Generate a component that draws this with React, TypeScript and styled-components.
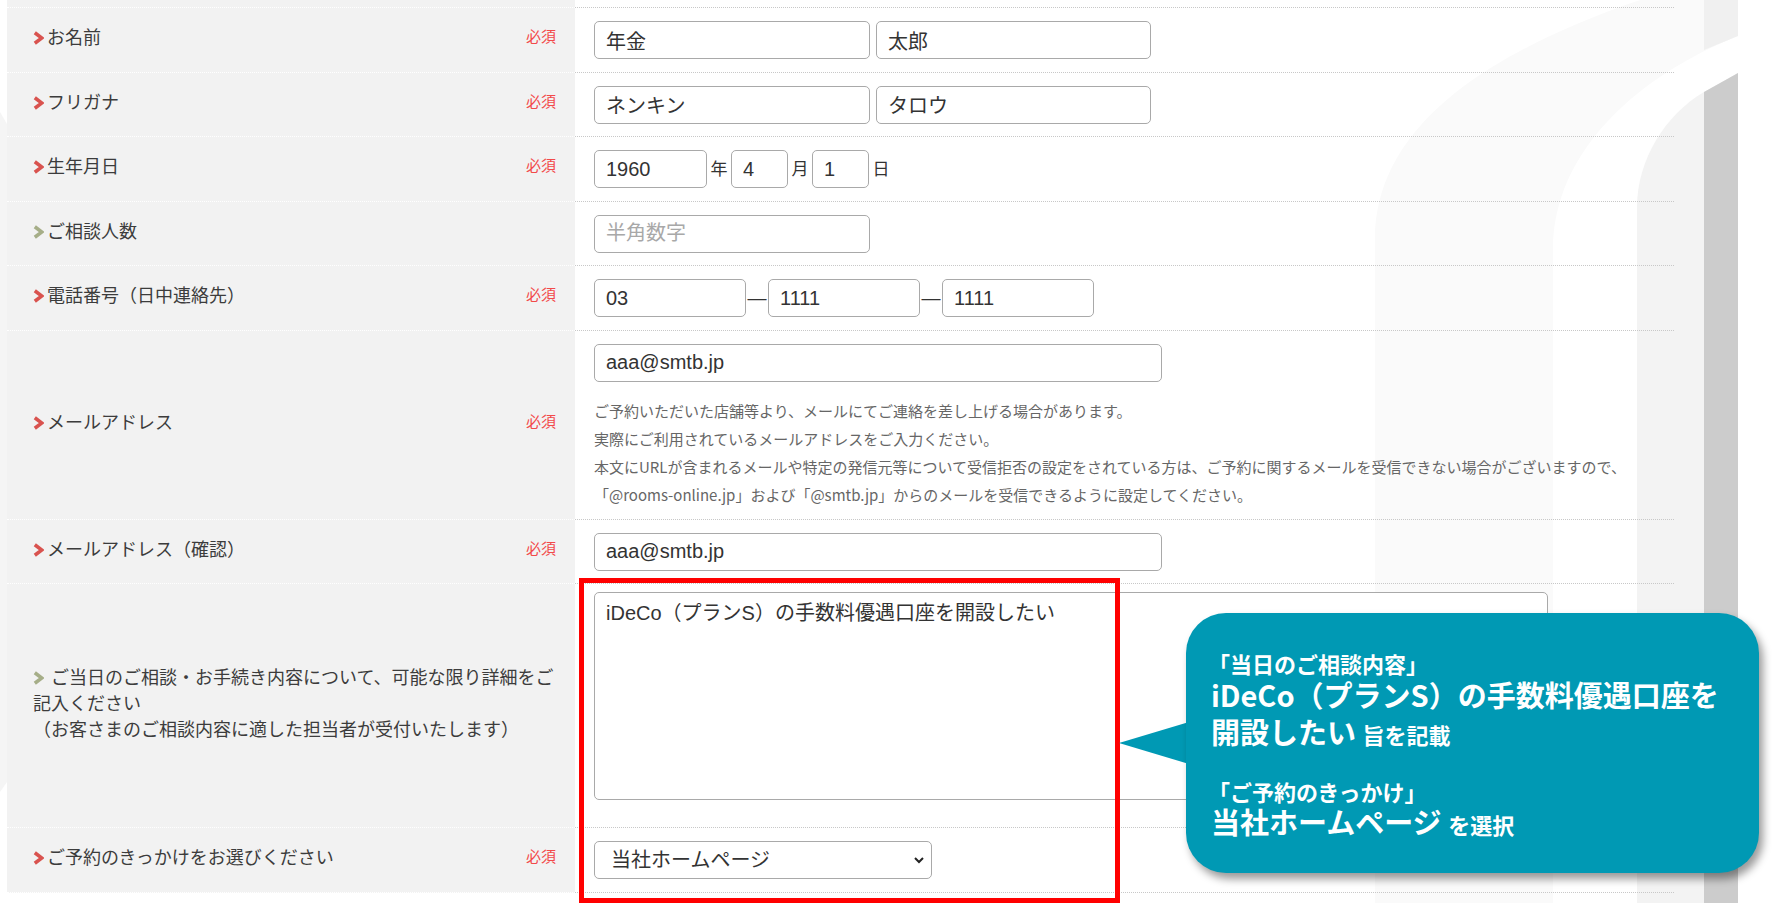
import React from 'react';
import styled, { createGlobalStyle } from 'styled-components';

const GlobalStyle = createGlobalStyle`
  html, body {
    margin: 0;
    padding: 0;
    background: #fff;
  }
  body {
    font-family: "Noto Sans CJK JP", "Noto Sans", sans-serif;
    color: #3c3c3c;
  }
`;

const Page = styled.div`
  position: relative;
  width: 1772px;
  height: 903px;
  overflow: hidden;
  background: #fff;
`;

const Backdrop = styled.svg`
  position: absolute;
  left: 0;
  top: 0;
  width: 1772px;
  height: 903px;
`;

const FormTable = styled.div`
  position: relative;
  margin-left: 7px;
  width: 1667px;
  padding-top: 7px;
  background: linear-gradient(to right, #f2f2f2 568px, transparent 568px);
`;

const Row = styled.div`
  display: grid;
  grid-template-columns: 568px 1fr;
`;

const LabelCell = styled.div<{ $last?: boolean }>`
  display: flex;
  align-items: center;
  padding: 0 19px 7px 26px;
  border-top: 1px dotted #fff;
  border-bottom: ${(p) => (p.$last ? '1px dotted #fff' : 'none')};
  font-size: 18px;
  line-height: 26px;
  color: #3c3c3c;
`;

const LabelText = styled.div`
  flex: 1;
  white-space: nowrap;
`;

const ChevronIcon = styled.svg`
  display: inline-block;
  vertical-align: -1px;
  margin-right: 3px;
`;

const Required = styled.span`
  margin-left: auto;
  font-size: 15px;
  color: #f24a4a;
`;

const ValueCell = styled.div<{ $pt: number; $pb: number; $last?: boolean }>`
  border-top: 1px dotted #c8c8c8;
  border-bottom: ${(p) => (p.$last ? '1px dotted #c8c8c8' : 'none')};
  padding: ${(p) => p.$pt}px 0 ${(p) => p.$pb}px 19px;
`;

const Inline = styled.div<{ $gap?: number }>`
  display: flex;
  align-items: center;
  gap: ${(p) => p.$gap ?? 0}px;
`;

const TextInput = styled.input<{ $w: number }>`
  box-sizing: border-box;
  width: ${(p) => p.$w}px;
  height: 38px;
  padding: 0 11px;
  border: 1px solid #a9a9a9;
  border-radius: 5px;
  background: #fff;
  font-family: "Liberation Sans", "Noto Sans CJK JP", sans-serif;
  font-size: 20px;
  color: #333;
  outline: none;

  &::placeholder {
    color: #a8a8a8;
  }
`;

const Unit = styled.span`
  width: 24px;
  margin-bottom: 4px;
  text-align: center;
  font-size: 17px;
  color: #333;
`;

const Dash = styled.span`
  width: 22px;
  text-align: center;
  font-family: "Liberation Sans", sans-serif;
  font-size: 19px;
  color: #333;
`;

const Notes = styled.div`
  margin-top: 15px;
  font-size: 15px;
  line-height: 28px;
  color: #666;
  white-space: nowrap;
`;

const MessageBox = styled.textarea`
  display: block;
  box-sizing: border-box;
  width: 954px;
  height: 208px;
  padding: 7px 11px;
  border: 1px solid #a9a9a9;
  border-radius: 5px;
  resize: none;
  font-family: "Liberation Sans", "Noto Sans CJK JP", sans-serif;
  font-size: 20px;
  line-height: 26px;
  color: #333;
  outline: none;
`;

const SelectWrap = styled.div`
  position: relative;
  width: 338px;
`;

const SelectBox = styled.select`
  appearance: none;
  box-sizing: border-box;
  width: 100%;
  height: 38px;
  padding: 0 30px 0 16px;
  border: 1px solid #a9a9a9;
  border-radius: 5px;
  background: #fff;
  font-family: "Liberation Sans", "Noto Sans CJK JP", sans-serif;
  font-size: 20px;
  color: #333;
  outline: none;
`;

const SelectArrow = styled.svg`
  position: absolute;
  right: 8px;
  top: 16px;
  pointer-events: none;
`;

const Highlight = styled.div`
  position: absolute;
  left: 579px;
  top: 578px;
  width: 541px;
  height: 325px;
  box-sizing: border-box;
  border: 5px solid #ff0000;
`;

const CalloutTail = styled.svg`
  position: absolute;
  left: 1117px;
  top: 718px;
`;

const Callout = styled.div`
  position: absolute;
  left: 1186px;
  top: 613px;
  width: 573px;
  height: 260px;
  box-sizing: border-box;
  padding: 37px 0 0 25px;
  border-radius: 40px;
  background: #0099b4;
  box-shadow: 4px 6px 8px rgba(0, 0, 0, 0.4);
  color: #fff;
  font-family: "Noto Sans CJK JP", sans-serif;
  font-weight: 700;
  white-space: nowrap;
`;

const Caption = styled.div<{ $mt?: number }>`
  margin-top: ${(p) => p.$mt ?? 0}px;
  margin-left: -3px;
  font-size: 22px;
  line-height: 26px;
`;

const Lead = styled.div<{ $lh: number }>`
  font-size: 29px;
  line-height: ${(p) => p.$lh}px;
`;

const Small = styled.span`
  font-size: 22px;
`;

const Chevron = ({ tone }: { tone: 'red' | 'olive' }) => (
  <ChevronIcon width="11" height="14" viewBox="0 0 11 14">
    <polyline
      points="1.8,1.8 8.8,7 1.8,12.2"
      fill="none"
      stroke={tone === 'red' ? '#d9534f' : '#a6ae88'}
      strokeWidth="3.6"
    />
  </ChevronIcon>
);

type FieldRowProps = {
  label: React.ReactNode;
  required?: boolean;
  tone?: 'red' | 'olive';
  pt?: number;
  pb?: number;
  last?: boolean;
  children: React.ReactNode;
};

const FieldRow = ({ label, required, tone = 'red', pt = 13, pb = 12.5, last, children }: FieldRowProps) => (
  <Row>
    <LabelCell $last={last}>
      <LabelText>
        <Chevron tone={tone} />
        {label}
      </LabelText>
      {required && <Required>必須</Required>}
    </LabelCell>
    <ValueCell $pt={pt} $pb={pb} $last={last}>
      {children}
    </ValueCell>
  </Row>
);

const notes = [
  'ご予約いただいた店舗等より、メールにてご連絡を差し上げる場合があります。',
  '実際にご利用されているメールアドレスをご入力ください。',
  '本文にURLが含まれるメールや特定の発信元等について受信拒否の設定をされている方は、ご予約に関するメールを受信できない場合がございますので、',
  '「@rooms-online.jp」および「@smtb.jp」からのメールを受信できるように設定してください。',
];

const App = () => {
  return (
    <Page>
      <GlobalStyle />
      <Backdrop viewBox="0 0 1772 903">
        <path d="M0,112 L7,124 L7,782 L0,792 Z" fill="#f5f5f5" />
        <path d="M1375,903 L1375,240 C1375,130 1480,55 1640,0 L1738,0 L1738,36 C1640,75 1553,150 1553,250 L1553,903 Z" fill="#fafafa" />
        <path d="M1637,903 L1637,207 C1637,160 1665,115 1704,92 L1738,73 L1738,903 Z" fill="#f3f3f3" />
        <path d="M1704,0 L1738,0 L1738,36 L1704,50 Z" fill="#f0f0f0" />
        <path d="M1704,903 L1704,92 L1738,73 L1738,903 Z" fill="#cccccc" />
      </Backdrop>

      <FormTable>
        <FieldRow label="お名前" required>
          <Inline $gap={6}>
            <TextInput $w={276} defaultValue="年金" />
            <TextInput $w={275} defaultValue="太郎" />
          </Inline>
        </FieldRow>
        <FieldRow label="フリガナ" required>
          <Inline $gap={6}>
            <TextInput $w={276} defaultValue="ネンキン" />
            <TextInput $w={275} defaultValue="タロウ" />
          </Inline>
        </FieldRow>
        <FieldRow label="生年月日" required>
          <Inline>
            <TextInput $w={113} defaultValue="1960" />
            <Unit>年</Unit>
            <TextInput $w={57} defaultValue="4" />
            <Unit>月</Unit>
            <TextInput $w={57} defaultValue="1" />
            <Unit>日</Unit>
          </Inline>
        </FieldRow>
        <FieldRow label="ご相談人数" tone="olive">
          <TextInput $w={276} placeholder="半角数字" />
        </FieldRow>
        <FieldRow label="電話番号（日中連絡先）" required>
          <Inline>
            <TextInput $w={152} defaultValue="03" />
            <Dash>—</Dash>
            <TextInput $w={152} defaultValue="1111" />
            <Dash>—</Dash>
            <TextInput $w={152} defaultValue="1111" />
          </Inline>
        </FieldRow>
        <FieldRow label="メールアドレス" required pb={10}>
          <TextInput $w={568} defaultValue="aaa@smtb.jp" />
          <Notes>
            {notes.map((line) => (
              <div key={line}>{line}</div>
            ))}
          </Notes>
        </FieldRow>
        <FieldRow label="メールアドレス（確認）" required>
          <TextInput $w={568} defaultValue="aaa@smtb.jp" />
        </FieldRow>
        <FieldRow
          tone="olive"
          pt={8}
          pb={27}
          label={
            <>
              {' ご当日のご相談・お手続き内容について、可能な限り詳細をご'}
              <br />
              記入ください
              <br />
              （お客さまのご相談内容に適した担当者が受付いたします）
            </>
          }
        >
          <MessageBox defaultValue="iDeCo（プランS）の手数料優遇口座を開設したい" />
        </FieldRow>
        <FieldRow label="ご予約のきっかけをお選びください" required last>
          <SelectWrap>
            <SelectBox defaultValue="hp">
              <option value="hp">当社ホームページ</option>
            </SelectBox>
            <SelectArrow width="10" height="7" viewBox="0 0 10 7">
              <polyline points="1,1 5,5 9,1" fill="none" stroke="#222" strokeWidth="2" />
            </SelectArrow>
          </SelectWrap>
        </FieldRow>
      </FormTable>

      <Highlight />

      <CalloutTail width="72" height="50" viewBox="0 0 72 50">
        <polygon points="2,25 72,4 72,46" fill="#0099b4" />
      </CalloutTail>
      <Callout>
        <Caption>「当日のご相談内容」</Caption>
        <Lead $lh={37}>iDeCo（プランS）の手数料優遇口座を</Lead>
        <Lead $lh={37}>
          開設したい <Small>旨を記載</Small>
        </Lead>
        <Caption $mt={25}>「ご予約のきっかけ」</Caption>
        <Lead $lh={34}>
          当社ホームページ <Small>を選択</Small>
        </Lead>
      </Callout>
    </Page>
  );
};

export default App;
